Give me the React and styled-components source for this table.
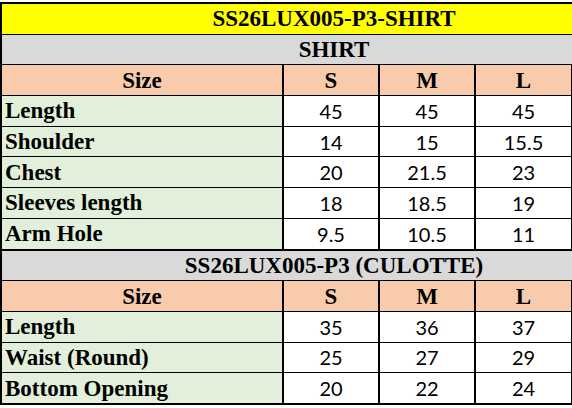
import styled, { createGlobalStyle } from "styled-components";

const GlobalStyle = createGlobalStyle`
    html, body {
        margin: 0;
        padding: 0;
        background: #fff;
    }
`;

const Page = styled.div`
    padding-top: 2px;
`;

const Sheet = styled.table`
    border-collapse: collapse;
    table-layout: fixed;
    width: 571px;
    border: 2px solid #000;
    border-right: 0;
    color: #000;
`;

const colors = {
    title: '#ffff00',
    section: '#d9d9d9',
    head: '#f8cbad',
    label: '#e2efda',
    value: '#ffffff'
};

const Cell = styled.td`
    height: 29.7px;
    padding: 0 ${props => props.$left ? '3px' : '0'};
    background-color: ${props => colors[props.$kind] || '#fff'};
    border-top: ${props => props.$thick ? '2px' : '1px'} solid #000;
    border-left: 2px solid #000;
    border-right: ${props => props.$last ? '2px solid #000' : '0'};
    text-align: ${props => props.$left ? 'left' : 'center'};
    vertical-align: middle;
    white-space: nowrap;
    font-family: ${props => props.$kind === 'value' ? 'Lato, "Liberation Sans", sans-serif' : '"Liberation Serif", "Times New Roman", serif'};
    font-weight: ${props => props.$kind === 'value' ? 400 : 700};
    font-size: ${props => props.$kind === 'value' ? '20px' : '23px'};
    line-height: 1;
`;

const TitleCell = styled(Cell)`
    padding-left: 94px;
`;

const sizes = ['S', 'M', 'L'];

const shirt = [
    ['Length', '45', '45', '45'],
    ['Shoulder', '14', '15', '15.5'],
    ['Chest', '20', '21.5', '23'],
    ['Sleeves length', '18', '18.5', '19'],
    ['Arm Hole', '9.5', '10.5', '11']
];

const culotte = [
    ['Length', '35', '36', '37'],
    ['Waist (Round)', '25', '27', '29'],
    ['Bottom Opening', '20', '22', '24']
];

function SizeRows({ rows }) {
    return <>
        <tr>
            <Cell $kind="head">Size</Cell>
            { sizes.map((s, i) => <Cell key={s} $kind="head" $last={i === 2}>{ s }</Cell>) }
        </tr>
        { rows.map(row => (
            <tr key={row[0]}>
                <Cell $kind="label" $left>{ row[0] }</Cell>
                { row.slice(1).map((v, i) => <Cell key={i} $kind="value" $last={i === 2}>{ v }</Cell>) }
            </tr>
        )) }
    </>;
}

export default function App() {
    return (
        <Page>
            <GlobalStyle />
            <Sheet>
                <colgroup>
                    <col style={{ width: 282 }} />
                    <col style={{ width: 96 }} />
                    <col style={{ width: 96 }} />
                    <col style={{ width: 97 }} />
                </colgroup>
                <tbody>
                    <tr>
                        <TitleCell colSpan={4} $kind="title">SS26LUX005-P3-SHIRT</TitleCell>
                    </tr>
                    <tr>
                        <TitleCell colSpan={4} $kind="section">SHIRT</TitleCell>
                    </tr>
                    <SizeRows rows={shirt} />
                    <tr>
                        <TitleCell colSpan={4} $kind="section" $thick>SS26LUX005-P3 (CULOTTE)</TitleCell>
                    </tr>
                    <SizeRows rows={culotte} />
                </tbody>
            </Sheet>
        </Page>
    );
}
